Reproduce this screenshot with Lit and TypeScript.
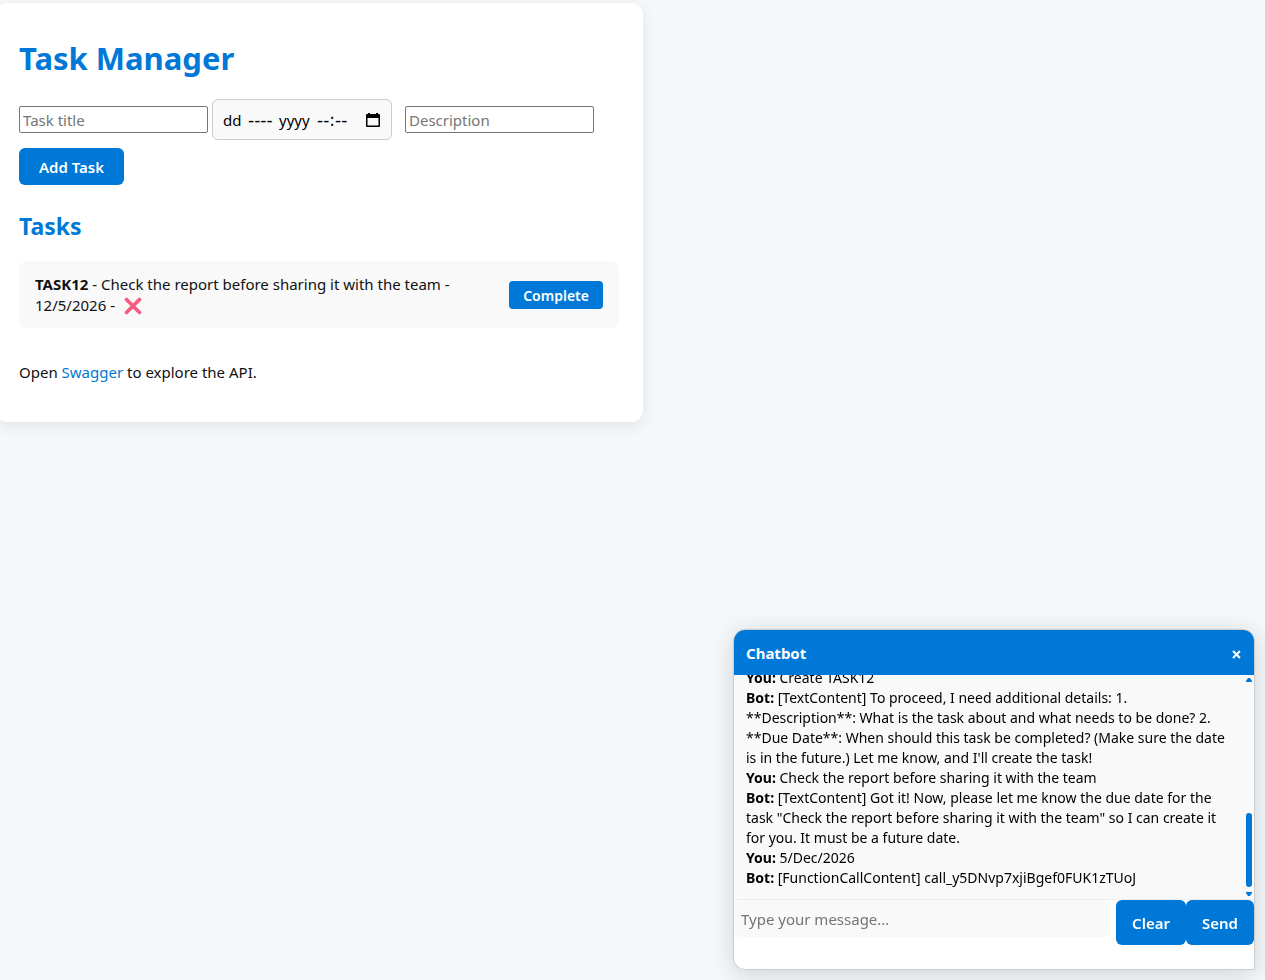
import { LitElement, html, css } from "lit";
import { customElement, state, query } from "lit/decorators.js";

interface Task {
  title: string;
  description: string;
  due: string;
  done: boolean;
}

interface Message {
  from: string;
  text: string;
}

const base = css`
  :host {
    display: block;
    box-sizing: border-box;
  }
  *,
  *::before,
  *::after {
    box-sizing: border-box;
  }
  button,
  input {
    font-family: inherit;
  }
  button {
    border: none;
    background: #0078d7;
    color: #fff;
    font-weight: 600;
    cursor: pointer;
  }
`;

@customElement("task-panel")
export class TaskPanel extends LitElement {
  static styles = [
    base,
    css`
      :host {
        padding: 24px;
        border-radius: 12px;
        background: #fff;
        box-shadow: 0 4px 16px rgba(0, 0, 0, 0.08);
      }
      h1,
      h2 {
        margin: 0;
        color: #0078d7;
        font-weight: 700;
      }
      h1 {
        padding-top: 10px;
        font-size: 31px;
        line-height: 42px;
      }
      h2 {
        margin-top: 26px;
        font-size: 23px;
        line-height: 30px;
      }
      .form {
        display: flex;
        flex-wrap: wrap;
        align-items: center;
        column-gap: 4px;
        row-gap: 8px;
        margin-top: 20px;
      }
      .plain {
        width: 189px;
        height: 27px;
        padding: 1px 3px;
        border: 1px solid #767676;
        border-radius: 2px;
        background: #fff;
        color: #000;
        font-size: 15px;
      }
      ::placeholder {
        color: #757575;
        opacity: 1;
      }
      .date {
        display: flex;
        align-items: center;
        gap: 6px;
        width: 180px;
        height: 41px;
        margin-right: 9px;
        padding: 0 11px 0 10px;
        border: 1px solid #ccc;
        border-radius: 6px;
        background: #f9f9f9;
      }
      .date input {
        height: 24px;
        padding: 0;
        border: none;
        background: none;
        color: #000;
        font-size: 15px;
      }
      .date .day {
        width: 19px;
      }
      .date .month {
        width: 25px;
      }
      .date .year {
        width: 32px;
      }
      .date .time {
        width: 32px;
      }
      .date .month,
      .date .time {
        font-family: "DejaVu Sans", sans-serif;
        font-size: 17px;
      }
      .pick {
        display: flex;
        margin-left: auto;
        padding: 0;
        background: none;
      }
      .add {
        height: 37px;
        padding: 0 20px;
        border-radius: 6px;
        font-size: 15px;
      }
      ul {
        margin: 20px 0 0;
        padding: 0;
        list-style: none;
      }
      li {
        display: flex;
        align-items: center;
        justify-content: space-between;
        gap: 24px;
        padding: 13px 16px 12px;
        border-radius: 8px;
        background: #f9f9f9;
        line-height: 21px;
      }
      .cross {
        width: 18px;
        height: 18px;
        margin-left: 5px;
        vertical-align: -4px;
      }
      .complete {
        height: 28px;
        padding: 0 14px;
        border-radius: 4px;
        font-size: 14px;
      }
      p {
        margin: 33px 0 15px;
        line-height: 22px;
      }
      a {
        color: #0078d7;
        text-decoration: none;
      }
    `,
  ];

  @state() private tasks: Task[] = [
    {
      title: "TASK12",
      description: "Check the report before sharing it with the team",
      due: "12/5/2026",
      done: false,
    },
  ];

  private complete(task: Task) {
    this.tasks = this.tasks.map((t) => (t === task ? { ...t, done: true } : t));
  }

  render() {
    return html`
      <h1>Task Manager</h1>
      <form class="form" @submit=${(e: Event) => e.preventDefault()}>
        <input class="plain" aria-label="Task title" placeholder="Task title" />
        <div class="date" role="group" aria-label="Due date">
          <input class="day" aria-label="Day" value="dd" />
          <input class="month" aria-label="Month" value="----" />
          <input class="year" aria-label="Year" value="yyyy" />
          <input class="time" aria-label="Time" value="--:--" />
          <button class="pick" type="button" aria-label="Show date picker">
            <svg width="14" height="16" viewBox="0 0 14 16">
              <path
                fill="#000"
                fill-rule="evenodd"
                d="M2 1h2v1h6V1h2v1h1a1 1 0 0 1 1 1v11a1 1 0 0 1-1 1H1a1 1 0 0 1-1-1V3a1 1 0 0 1 1-1h1zM1.500 6v7.500h11V6z"
              />
            </svg>
          </button>
        </div>
        <input class="plain" aria-label="Description" placeholder="Description" />
        <button class="add" type="submit">Add Task</button>
      </form>
      <h2>Tasks</h2>
      <ul>
        ${this.tasks.map(
          (t) => html`<li>
            <span
              ><strong>${t.title}</strong> - ${t.description} - ${t.due} -
              ${t.done
                ? "✓"
                : html`<svg class="cross" viewBox="0 0 18 18" role="img" aria-label="Not done">
                    <path
                      d="M2.500 2.500l13 13M15.500 2.500l-13 13"
                      stroke="#f8597f"
                      stroke-width="3.600"
                      stroke-linecap="round"
                    />
                  </svg>`}</span
            >
            <button class="complete" @click=${() => this.complete(t)}>Complete</button>
          </li>`
        )}
      </ul>
      <p>Open <a href="#swagger">Swagger</a> to explore the API.</p>
    `;
  }
}

@customElement("chat-window")
export class ChatWindow extends LitElement {
  static styles = [
    base,
    css`
      :host {
        display: flex;
        flex-direction: column;
        overflow: hidden;
        border: 1px solid #ccc;
        border-radius: 12px 12px 0 12px;
        background: #fff;
        box-shadow: 0 4px 24px rgba(0, 0, 0, 0.15);
      }
      header {
        display: flex;
        align-items: center;
        justify-content: space-between;
        height: 45px;
        padding: 0 12px;
        background: #0078d7;
        color: #fff;
        font-size: 15px;
        font-weight: 700;
      }
      .close {
        display: flex;
        padding: 3px 0 0;
      }
      .body {
        display: flex;
        height: 225px;
        border-bottom: 1px solid #eee;
        background: #f9f9f9;
      }
      .log {
        flex: 1;
        min-width: 0;
        padding: 12px 8px 11px 12px;
        overflow-y: auto;
        scrollbar-width: none;
        color: #000;
        font-size: 14px;
        line-height: 20px;
      }
      .bar {
        display: flex;
        flex-direction: column;
        align-items: center;
        justify-content: space-between;
        width: 10px;
        padding: 3px 1px 3px 0;
      }
      .track {
        display: flex;
        flex: 1;
        align-items: flex-end;
        padding: 3px 0 5px;
      }
      .thumb {
        width: 6px;
        height: 74px;
        border-radius: 3px;
        background: #0078d7;
      }
      form {
        display: flex;
        align-items: flex-start;
        padding-bottom: 24px;
      }
      .entry {
        flex: 1;
        min-width: 0;
        height: 37px;
        margin-right: 8px;
        padding: 0 7px;
        border: none;
        border-radius: 6px;
        background: #f9f9f9;
        font-size: 15px;
      }
      .entry::placeholder {
        color: #757575;
        opacity: 1;
      }
      .action {
        height: 45px;
        padding: 0 16px;
        border-radius: 6px;
        font-size: 15px;
      }
    `,
  ];

  @query(".log") private log!: HTMLElement;

  @state() private messages: Message[] = [
    { from: "You", text: "Create TASK12" },
    {
      from: "Bot",
      text: "[TextContent] To proceed, I need additional details: 1. **Description**: What is the task about and what needs to be done? 2. **Due Date**: When should this task be completed? (Make sure the date is in the future.) Let me know, and I'll create the task!",
    },
    { from: "You", text: "Check the report before sharing it with the team" },
    {
      from: "Bot",
      text: '[TextContent] Got it! Now, please let me know the due date for the task "Check the report before sharing it with the team" so I can create it for you. It must be a future date.',
    },
    { from: "You", text: "5/Dec/2026" },
    { from: "Bot", text: "[FunctionCallContent] call_y5DNvp7xjiBgef0FUK1zTUoJ" },
  ];

  updated() {
    this.log.scrollTop = this.log.scrollHeight;
  }

  render() {
    return html`
      <header>
        <span>Chatbot</span>
        <button class="close" aria-label="Close">
          <svg width="11" height="9" viewBox="0 0 11 9">
            <path d="M2 1l7 7M9 1l-7 7" stroke="#fff" stroke-width="2" />
          </svg>
        </button>
      </header>
      <div class="body">
        <div class="log" role="log" tabindex="0">
          ${this.messages.map((m) => html`<div><strong>${m.from}:</strong> ${m.text}</div>`)}
        </div>
        <div class="bar" aria-hidden="true">
          <svg width="6" height="4" viewBox="0 0 6 4"><path d="M0 4V3l2-3h2l2 3v1z" fill="#0078d7" /></svg>
          <div class="track"><div class="thumb"></div></div>
          <svg width="6" height="4" viewBox="0 0 6 4"><path d="M0 0v1l2 3h2l2-3V0z" fill="#0078d7" /></svg>
        </div>
      </div>
      <form @submit=${(e: Event) => e.preventDefault()}>
        <input class="entry" aria-label="Message" placeholder="Type your message..." />
        <button class="action" type="button" @click=${() => (this.messages = [])}>Clear</button>
        <button class="action" type="submit">Send</button>
      </form>
    `;
  }
}

@customElement("app-root")
export class AppRoot extends LitElement {
  static styles = css`
    :host {
      display: block;
      box-sizing: border-box;
      min-height: 100vh;
      padding-top: 3px;
      overflow: hidden;
      background: #f4f8fb;
      color: #111;
      font-family: "Segoe UI", "Noto Sans", "Open Sans", sans-serif;
      font-size: 15px;
    }
    .panel {
      max-width: 648px;
      margin-left: -5px;
    }
    .chat {
      position: fixed;
      right: 10px;
      bottom: 10px;
      width: 522px;
      max-width: calc(100vw - 20px);
    }
  `;

  render() {
    return html`
      <task-panel class="panel"></task-panel>
      <chat-window class="chat"></chat-window>
    `;
  }
}
